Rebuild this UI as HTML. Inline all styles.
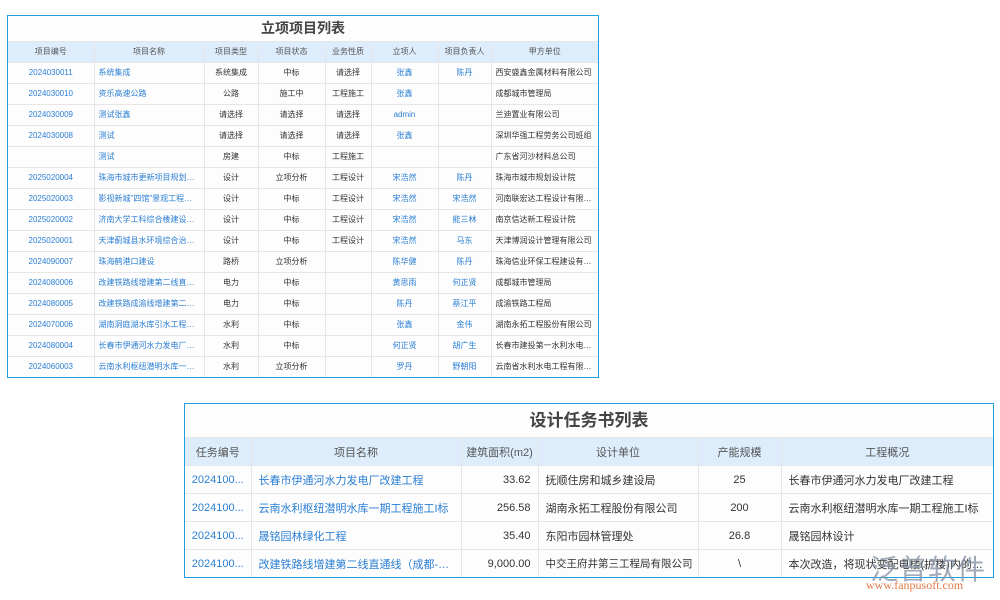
<!DOCTYPE html>
<html><head><meta charset="utf-8"><style>
body{margin:0;width:1000px;height:600px;background:#fff;position:relative;font-family:"Liberation Sans","Noto Sans CJK SC",sans-serif;overflow:hidden}
.box{position:absolute;border:1px solid #1ea0e0;background:#fdfdfd;box-sizing:border-box}
.title{text-align:center;font-weight:bold;color:#444}
table{border-collapse:collapse;width:100%;table-layout:fixed}
td,th{border:1px solid #e6e6e6;white-space:nowrap;overflow:hidden;text-overflow:ellipsis;padding:0 4px;color:#333;font-weight:normal}
tr:last-child td{border-bottom:none}
td:first-child,th:first-child{border-left:none}
td:last-child,th:last-child{border-right:none}
th{background:#ddedfb;color:#555}
.b{color:#2b7fd4}
.t1 td,.t1 th{font-size:8px;height:20px;padding-top:0;padding-bottom:0;text-align:center;line-height:10px}
.t1 td.l{text-align:left}
.t2 td,.t2 th{font-size:11px;height:27px;text-align:center}
.t2 td.l{text-align:left;padding-left:7px;padding-right:2px}
.t2 td.r{text-align:right;padding-right:7px}
</style></head><body>
<div class="box" style="left:7px;top:15px;width:592px;height:363px;overflow:hidden">
<div class="title" style="height:25px;line-height:25px;font-size:14px">立项项目列表</div>
<table class="t1">
<colgroup><col style="width:86px"><col style="width:110px"><col style="width:54px"><col style="width:67px"><col style="width:46px"><col style="width:67px"><col style="width:53px"><col></colgroup>
<tr><th>项目编号</th><th>项目名称</th><th>项目类型</th><th>项目状态</th><th>业务性质</th><th>立项人</th><th>项目负责人</th><th>甲方单位</th></tr>
<tr><td class="b">2024030011</td><td class="l b">系统集成</td><td>系统集成</td><td>中标</td><td>请选择</td><td class="b">张鑫</td><td class="b">陈丹</td><td class="l">西安盛鑫金属材料有限公司</td></tr>
<tr><td class="b">2024030010</td><td class="l b">资乐高速公路</td><td>公路</td><td>施工中</td><td>工程施工</td><td class="b">张鑫</td><td></td><td class="l">成都城市管理局</td></tr>
<tr><td class="b">2024030009</td><td class="l b">测试张鑫</td><td>请选择</td><td>请选择</td><td>请选择</td><td class="b">admin</td><td></td><td class="l">兰迪置业有限公司</td></tr>
<tr><td class="b">2024030008</td><td class="l b">测试</td><td>请选择</td><td>请选择</td><td>请选择</td><td class="b">张鑫</td><td></td><td class="l">深圳华强工程劳务公司班组</td></tr>
<tr><td></td><td class="l b">测试</td><td>房建</td><td>中标</td><td>工程施工</td><td></td><td></td><td class="l">广东省河沙材料总公司</td></tr>
<tr><td class="b">2025020004</td><td class="l b">珠海市城市更新项目规划设计</td><td>设计</td><td>立项分析</td><td>工程设计</td><td class="b">宋浩然</td><td class="b">陈丹</td><td class="l">珠海市城市规划设计院</td></tr>
<tr><td class="b">2025020003</td><td class="l b">影视新城"四馆"景观工程设计</td><td>设计</td><td>中标</td><td>工程设计</td><td class="b">宋浩然</td><td class="b">宋浩然</td><td class="l">河南联宏达工程设计有限公司</td></tr>
<tr><td class="b">2025020002</td><td class="l b">济南大学工科综合楼建设设计</td><td>设计</td><td>中标</td><td>工程设计</td><td class="b">宋浩然</td><td class="b">能三林</td><td class="l">南京信达新工程设计院</td></tr>
<tr><td class="b">2025020001</td><td class="l b">天津蓟城县水环境综合治理工程</td><td>设计</td><td>中标</td><td>工程设计</td><td class="b">宋浩然</td><td class="b">马东</td><td class="l">天津博润设计管理有限公司</td></tr>
<tr><td class="b">2024090007</td><td class="l b">珠海鹤港口建设</td><td>路桥</td><td>立项分析</td><td></td><td class="b">陈华健</td><td class="b">陈丹</td><td class="l">珠海信业环保工程建设有限公司</td></tr>
<tr><td class="b">2024080006</td><td class="l b">改建铁路线增建第二线直通线</td><td>电力</td><td>中标</td><td></td><td class="b">黄思雨</td><td class="b">何正贤</td><td class="l">成都城市管理局</td></tr>
<tr><td class="b">2024080005</td><td class="l b">改建铁路成渝线增建第二线工程</td><td>电力</td><td>中标</td><td></td><td class="b">陈丹</td><td class="b">蔡江平</td><td class="l">成渝铁路工程局</td></tr>
<tr><td class="b">2024070006</td><td class="l b">湖南洞庭湖水库引水工程施工</td><td>水利</td><td>中标</td><td></td><td class="b">张鑫</td><td class="b">金伟</td><td class="l">湖南永拓工程股份有限公司</td></tr>
<tr><td class="b">2024080004</td><td class="l b">长春市伊通河水力发电厂改建工程</td><td>水利</td><td>中标</td><td></td><td class="b">何正贤</td><td class="b">胡广生</td><td class="l">长春市建投第一水利水电建设公司</td></tr>
<tr><td class="b">2024060003</td><td class="l b">云南水利枢纽潜明水库一期工程</td><td>水利</td><td>立项分析</td><td></td><td class="b">罗丹</td><td class="b">野朝阳</td><td class="l">云南省水利水电工程有限公司</td></tr>
</table></div>

<div class="box" style="left:184px;top:403px;width:810px;height:175px;overflow:hidden">
<div class="title" style="height:33px;line-height:33px;font-size:17px">设计任务书列表</div>
<table class="t2">
<colgroup><col style="width:66px"><col style="width:210px"><col style="width:77px"><col style="width:160px"><col style="width:83px"><col></colgroup>
<tr><th>任务编号</th><th>项目名称</th><th>建筑面积(m2)</th><th>设计单位</th><th>产能规模</th><th>工程概况</th></tr>
<tr><td class="b">2024100...</td><td class="l b">长春市伊通河水力发电厂改建工程</td><td class="r">33.62</td><td class="l">抚顺住房和城乡建设局</td><td>25</td><td class="l">长春市伊通河水力发电厂改建工程</td></tr>
<tr><td class="b">2024100...</td><td class="l b">云南水利枢纽潜明水库一期工程施工I标</td><td class="r">256.58</td><td class="l">湖南永拓工程股份有限公司</td><td>200</td><td class="l">云南水利枢纽潜明水库一期工程施工I标</td></tr>
<tr><td class="b">2024100...</td><td class="l b">晟铭园林绿化工程</td><td class="r">35.40</td><td class="l">东阳市园林管理处</td><td>26.8</td><td class="l">晟铭园林设计</td></tr>
<tr><td class="b">2024100...</td><td class="l b">改建铁路线增建第二线直通线（成都-西安...</td><td class="r">9,000.00</td><td class="l" style="font-size:10.5px">中交王府井第三工程局有限公司</td><td>\</td><td class="l">本次改造，将现状变配电楼(护楼)内的设...</td></tr>
</table></div>
<div style="position:absolute;left:870px;top:548px;font-size:28px;color:#8a96a8;opacity:.8;letter-spacing:1px">泛普软件</div>
<div style="position:absolute;left:866px;top:578px;font-size:12px;color:#e07a4a;font-family:'Liberation Serif',serif">www.fanpusoft.com</div>
</body></html>
